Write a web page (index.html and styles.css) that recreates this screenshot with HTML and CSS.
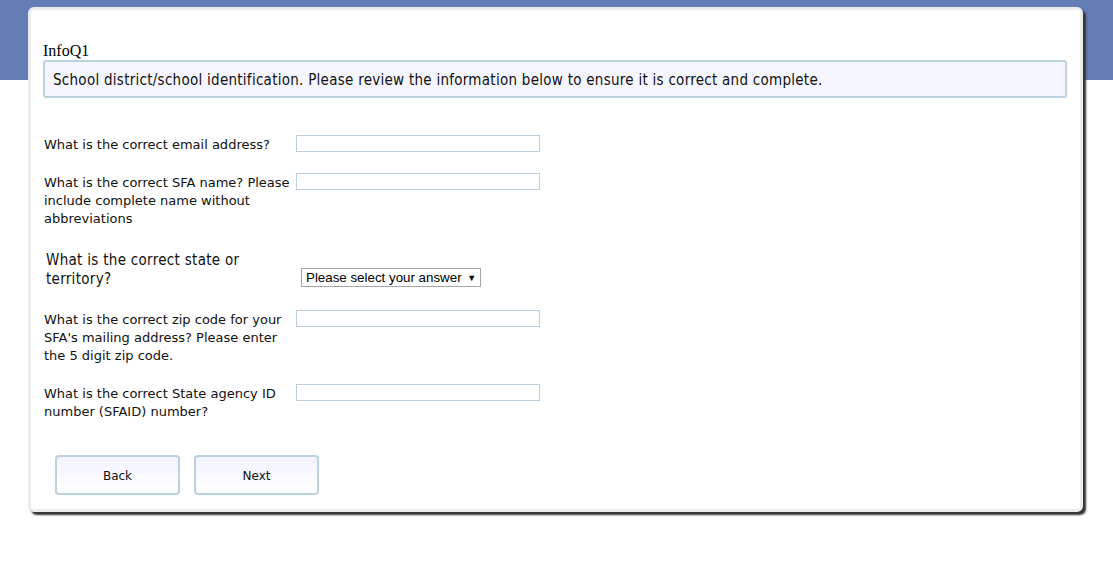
FILE: index.html
```html
<!DOCTYPE html>
<html lang="en">
<head>
<meta charset="utf-8">
<title>InfoQ1</title>
<link rel="stylesheet" href="styles.css">
</head>
<body>
<div class="card">
  <div class="qid">InfoQ1</div>
  <div class="intro">School district/school identification. Please review the information below to ensure it is correct and complete.</div>
  <div class="questions">
    <div class="row row-email">
      <label class="label">What is the correct email address?</label>
      <input class="field" type="text">
    </div>
    <div class="row row-sfa">
      <label class="label">What is the correct SFA name? Please include complete name without abbreviations</label>
      <input class="field" type="text">
    </div>
    <div class="row row-state">
      <label class="label label-big">What is the correct state or territory?</label>
      <div class="select">Please select your answer <span class="arrow">&#9660;</span></div>
    </div>
    <div class="row row-zip">
      <label class="label">What is the correct zip code for your SFA's mailing address? Please enter the 5 digit zip code.</label>
      <input class="field" type="text">
    </div>
    <div class="row row-id">
      <label class="label">What is the correct State agency ID number (SFAID) number?</label>
      <input class="field" type="text">
    </div>
  </div>
  <div class="buttons">
    <button class="btn" type="button">Back</button>
    <button class="btn" type="button">Next</button>
  </div>
</div>
</body>
</html>
```
FILE: styles.css
```css
html, body {
  margin: 0;
  padding: 0;
}
body {
  width: 1113px;
  height: 569px;
  background: linear-gradient(#657db5 0, #657db5 80px, #ffffff 80px);
  font-family: "DejaVu Sans", Tahoma, sans-serif;
  color: #111;
  overflow: hidden;
}
.card {
  box-sizing: border-box;
  margin: 7px 0 0 28px;
  width: 1055px;
  height: 505px;
  background: #fff;
  border: 3px solid #ececec;
  border-radius: 6px;
  box-shadow: 3px 3px 2px #333;
  padding: 31px 13px 0 12px;
}
.qid {
  font-family: "Liberation Serif", serif;
  font-size: 16px;
  line-height: 19px;
  color: #000;
  height: 19px;
}
.intro {
  box-sizing: border-box;
  width: 1024px;
  height: 38px;
  border: 2px solid #bcd2df;
  border-radius: 3px;
  background: #f5f6ff;
  padding: 1px 8px 0;
  font-family: "DejaVu Sans Condensed", "DejaVu Sans", sans-serif;
  font-size: 15px;
  letter-spacing: 0.27px;
  line-height: 34px;
  color: #111;
  white-space: nowrap;
}
.questions {
  margin-top: 37px;
  display: flex;
  flex-direction: column;
}
.row {
  display: flex;
  align-items: flex-start;
}
.label {
  width: 252px;
  flex: none;
  font-size: 13px;
  line-height: 18px;
  padding-top: 1px;
  padding-left: 1px;
}
.label-big {
  font-family: "DejaVu Sans Condensed", "DejaVu Sans", sans-serif;
  font-size: 15px;
  letter-spacing: 0.3px;
  line-height: 19px;
  width: 252px;
  padding-left: 3px;
  padding-top: 0;
  box-sizing: border-box;
  padding-right: 40px;
}
.field {
  box-sizing: border-box;
  width: 244px;
  height: 17px;
  margin: 0;
  padding: 0;
  border: 1px solid #bccfda;
  background: #fff;
}
.row-sfa { margin-top: 19px; }
.row-state { margin-top: 23px; }
.row-zip { margin-top: 21px; }
.row-id { margin-top: 19px; }
.select {
  box-sizing: border-box;
  margin: 17px 0 0 6px;
  width: 180px;
  height: 19px;
  border: 1px solid #a6a6a6;
  background: #fff;
  font-family: "Liberation Sans", Arial, sans-serif;
  font-size: 13.33px;
  line-height: 17px;
  padding-left: 4px;
  color: #000;
  white-space: nowrap;
}
.arrow {
  font-size: 9px;
  vertical-align: 1px;
  margin-left: 2px;
}
.buttons {
  margin: 34px 0 0 12px;
  display: flex;
  gap: 14px;
}
.btn {
  box-sizing: border-box;
  width: 125px;
  height: 40px;
  border: 2px solid #bcd2df;
  border-radius: 4px;
  background: linear-gradient(#f2f3ff, #ffffff);
  font-family: "DejaVu Sans", Tahoma, sans-serif;
  font-size: 12px;
  color: #111;
  padding: 2px 0 0;
}
```
